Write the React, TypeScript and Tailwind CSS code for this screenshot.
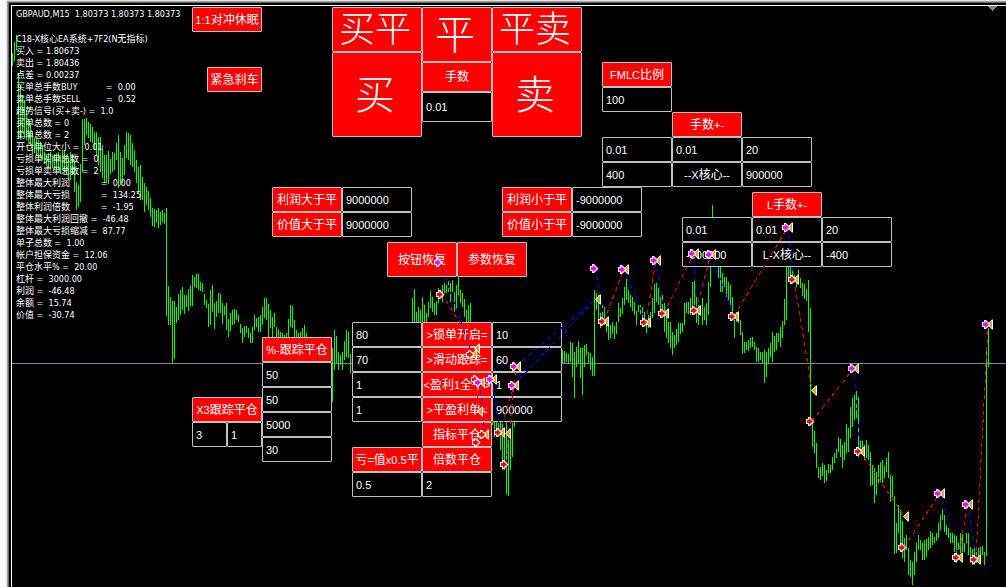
import React from 'react';
import { clsx } from 'clsx';

type Range = [number, number];

interface CandleRun {
  start: number;
  bars: Range[];
}

interface Trade {
  from: Range;
  to: Range;
  side: 'buy' | 'sell';
}

interface Marker {
  x: number;
  y: number;
  entry?: 'buy' | 'sell';
  exit?: boolean;
}

// canvas area starts right after the window frame
const ORIGIN_X = 12;
const ORIGIN_Y = 6;
const BAR_STEP = 2;
const PRICE_Y = 363;

const CANDLES: CandleRun[] = [
  {
    start: 12,
    bars: [
      [53, 66], [42, 61], [35, 50], [73, 139], [85, 140], [95, 132], [100, 138], [110, 140], [120, 142], [125, 145],
      [133, 154], [138, 153], [138, 156], [140, 158], [142, 158], [145, 160], [152, 164], [155, 166], [153, 168], [152, 168],
      [155, 168], [155, 170], [153, 169], [152, 170], [155, 174], [150, 170], [150, 172], [155, 175], [158, 180], [152, 180],
      [154, 175], [160, 192], [182, 210], [185, 207], [164, 202],
      [119, 172], [119, 145], [118, 135], [122, 138], [124, 142], [127, 143], [132, 150], [132, 155], [137, 165], [137, 172],
      [145, 178], [155, 183], [155, 183], [151, 184], [159, 174], [152, 172], [153, 170], [143, 160], [135, 188], [152, 185],
      [158, 183], [145, 175], [132, 158], [133, 160], [135, 165], [143, 167], [150, 172], [160, 183], [167, 193], [165, 200],
      [177, 200], [183, 212], [187, 205], [191, 210], [198, 217], [208, 226], [209, 227], [210, 223], [208, 228], [212, 225],
      [210, 222], [213, 224], [208, 316],
      [286, 325], [297, 325], [301, 363], [301, 359], [307, 323], [294, 320], [290, 315], [287, 310], [295, 314], [295, 307],
      [289, 311], [285, 306], [275, 306], [277, 287], [274, 288], [274, 290], [282, 291], [283, 292], [294, 305], [300, 308],
      [304, 327], [290, 325], [285, 312], [303, 329], [301, 317], [293, 313], [294, 313], [303, 324], [306, 315], [303, 330],
      [319, 337], [313, 331], [310, 325], [309, 324], [310, 320], [315, 322], [324, 333], [328, 343], [326, 337], [326, 333],
      [328, 338], [333, 343], [327, 343], [315, 330], [318, 327], [317, 332], [315, 332], [307, 325], [298, 318], [298, 320],
      [304, 337], [310, 328], [317, 337], [313, 327], [327, 337], [329, 340], [332, 340], [333, 343], [335, 340], [333, 337],
      [319, 338], [305, 327], [306, 328], [320, 337], [330, 338], [333, 338], [332, 338], [328, 338], [325, 338], [333, 338],
    ],
  },
  {
    start: 332,
    bars: [[348, 402], [330, 370], [336, 363], [352, 370], [355, 365], [352, 370], [341, 360], [330, 357], [332, 358], [354, 373]],
  },
  {
    start: 412,
    bars: [
      [298, 322], [289, 322], [312, 322], [307, 322], [310, 322], [297, 322], [305, 322], [313, 322], [302, 317], [291, 308],
      [297, 312], [303, 315], [301, 315], [288, 303], [290, 297], [285, 302], [283, 293], [285, 293], [281, 292], [283, 302],
      [280, 292], [292, 312], [285, 310], [277, 295], [290, 303], [293, 307], [299, 317], [310, 322], [305, 322], [303, 322],
    ],
  },
  {
    start: 492,
    bars: [
      [422, 425], [422, 437], [422, 430], [422, 436], [422, 450], [422, 470], [437, 470], [422, 494], [437, 496], [430, 470],
      [423, 457], [421, 427],
    ],
  },
  {
    start: 562,
    bars: [
      [350, 363], [351, 363], [353, 362], [354, 363], [342, 362], [343, 377], [352, 398], [347, 367], [341, 363], [348, 378],
      [348, 395], [345, 367], [344, 355], [352, 363], [353, 370], [357, 376], [290, 376], [293, 310], [295, 322], [313, 328],
      [305, 323], [307, 325], [318, 332], [323, 340], [325, 338], [322, 334], [326, 339], [322, 334], [303, 322], [308, 317],
      [298, 314], [287, 305], [279, 300], [290, 303], [295, 307], [297, 311], [302, 315], [311, 325], [305, 312], [305, 314],
      [307, 318], [312, 325], [318, 333], [315, 328], [312, 323], [298, 318], [284, 313], [283, 302], [288, 305], [297, 315],
      [295, 317], [303, 332], [315, 338], [322, 343], [322, 348], [332, 355], [335, 348], [329, 345], [323, 342], [323, 334],
      [323, 332], [303, 325], [302, 313], [302, 314], [298, 315], [282, 308], [279, 305], [297, 323], [305, 325], [305, 315],
      [298, 325], [307, 320], [303, 325], [282, 315], [262, 287], [205, 265], [260, 266], [260, 266], [260, 278], [260, 292],
      [273, 292], [277, 287], [277, 297], [282, 300], [285, 305], [297, 320], [320, 338], [312, 322], [316, 323], [320, 335],
      [332, 354], [342, 353], [342, 350], [340, 351], [338, 348], [337, 347], [342, 350], [347, 362], [348, 362], [352, 360],
      [352, 363], [350, 383], [352, 377], [348, 363], [343, 357], [332, 362], [336, 352], [333, 350], [333, 342], [327, 347],
      [321, 338], [299, 325], [262, 320], [262, 278], [262, 277], [262, 276], [275, 283], [278, 287], [270, 277], [278, 288],
      [283, 296], [284, 299], [289, 301], [280, 332], [308, 420], [420, 447], [431, 453], [443, 468], [467, 478], [467, 480],
      [463, 476], [465, 483], [470, 481], [464, 473], [465, 473], [457, 470], [453, 463], [449, 458], [437, 452], [439, 457],
      [445, 468], [442, 460], [424, 453], [428, 452], [407, 438], [398, 427], [395, 420], [391, 418], [397, 457], [441, 450],
      [441, 453], [445, 460], [440, 458], [445, 460], [452, 486], [465, 485], [468, 503], [472, 495], [465, 483], [462, 482],
      [460, 483], [466, 478], [458, 472], [452, 478], [475, 502], [476, 497], [496, 554], [523, 553], [505, 533], [510, 550],
      [521, 558], [538, 562], [535, 550], [548, 575], [560, 577], [562, 585], [552, 575], [543, 562], [535, 550], [540, 550],
      [543, 560], [540, 560], [539, 557], [537, 550], [531, 548], [533, 545], [537, 543], [533, 541], [523, 538], [515, 530],
      [509, 520], [515, 532], [525, 535], [528, 538], [533, 543], [533, 543], [535, 552], [536, 563], [543, 550], [533, 553],
      [534, 552], [543, 552], [533, 543], [533, 555], [547, 563], [549, 565], [548, 565], [552, 563], [548, 558], [547, 563],
      [546, 555], [552, 565], [351, 556], [328, 367],
    ],
  },
];

const TRADES: Trade[] = [
  { from: [440, 262], to: [472, 354], side: 'buy' },
  { from: [442, 294], to: [476, 349], side: 'sell' },
  { from: [476, 379], to: [478, 411], side: 'sell' },
  { from: [480, 382], to: [484, 434], side: 'buy' },
  { from: [478, 442], to: [492, 379], side: 'sell' },
  { from: [492, 379], to: [500, 432], side: 'buy' },
  { from: [500, 432], to: [514, 385], side: 'sell' },
  { from: [506, 464], to: [516, 366], side: 'sell' },
  { from: [516, 366], to: [596, 299], side: 'buy' },
  { from: [514, 385], to: [596, 299], side: 'buy' },
  { from: [596, 268], to: [604, 321], side: 'buy' },
  { from: [604, 321], to: [624, 269], side: 'sell' },
  { from: [624, 269], to: [646, 322], side: 'buy' },
  { from: [646, 322], to: [656, 260], side: 'sell' },
  { from: [656, 260], to: [664, 313], side: 'buy' },
  { from: [664, 313], to: [694, 253], side: 'sell' },
  { from: [694, 253], to: [696, 310], side: 'buy' },
  { from: [696, 310], to: [711, 254], side: 'sell' },
  { from: [711, 254], to: [734, 316], side: 'buy' },
  { from: [734, 316], to: [788, 227], side: 'sell' },
  { from: [788, 227], to: [794, 279], side: 'buy' },
  { from: [794, 279], to: [812, 390], side: 'sell' },
  { from: [812, 421], to: [854, 368], side: 'sell' },
  { from: [854, 368], to: [860, 451], side: 'buy' },
  { from: [860, 451], to: [904, 516], side: 'sell' },
  { from: [904, 547], to: [940, 493], side: 'sell' },
  { from: [940, 493], to: [958, 557], side: 'buy' },
  { from: [958, 557], to: [968, 504], side: 'sell' },
  { from: [968, 504], to: [976, 559], side: 'buy' },
  { from: [976, 559], to: [988, 324], side: 'sell' },
];

const MARKERS: Marker[] = [
  { x: 440, y: 262, entry: 'buy' },
  { x: 442, y: 294, entry: 'sell' },
  { x: 475, y: 348, exit: true },
  { x: 472, y: 354, entry: 'sell', exit: true },
  { x: 477, y: 379, entry: 'sell' },
  { x: 480, y: 382, entry: 'buy', exit: true },
  { x: 492, y: 379, entry: 'buy', exit: true },
  { x: 516, y: 366, entry: 'buy', exit: true },
  { x: 514, y: 385, entry: 'buy', exit: true },
  { x: 478, y: 411, exit: true },
  { x: 484, y: 434, entry: 'sell', exit: true },
  { x: 478, y: 442, entry: 'sell' },
  { x: 500, y: 432, entry: 'sell', exit: true },
  { x: 506, y: 433, exit: true },
  { x: 506, y: 464, entry: 'sell' },
  { x: 596, y: 268, entry: 'buy' },
  { x: 596, y: 299, exit: true },
  { x: 604, y: 321, entry: 'sell', exit: true },
  { x: 624, y: 269, entry: 'buy', exit: true },
  { x: 646, y: 322, entry: 'sell', exit: true },
  { x: 656, y: 260, entry: 'buy', exit: true },
  { x: 664, y: 313, entry: 'sell', exit: true },
  { x: 694, y: 253, entry: 'buy', exit: true },
  { x: 696, y: 310, entry: 'sell', exit: true },
  { x: 711, y: 254, entry: 'buy', exit: true },
  { x: 734, y: 316, entry: 'sell', exit: true },
  { x: 788, y: 227, entry: 'buy', exit: true },
  { x: 794, y: 279, entry: 'sell', exit: true },
  { x: 812, y: 390, exit: true },
  { x: 812, y: 421, entry: 'sell' },
  { x: 854, y: 368, entry: 'buy', exit: true },
  { x: 860, y: 451, entry: 'sell', exit: true },
  { x: 904, y: 516, exit: true },
  { x: 904, y: 547, entry: 'sell' },
  { x: 940, y: 493, entry: 'buy', exit: true },
  { x: 958, y: 557, entry: 'sell', exit: true },
  { x: 968, y: 504, entry: 'buy', exit: true },
  { x: 976, y: 559, entry: 'sell', exit: true },
  { x: 988, y: 324, entry: 'buy', exit: true },
];

const COMMENT_LINES = [
  'C18-X核心EA系统+7F2(N无指标)',
  '买入 = 1.80673',
  '卖出 = 1.80436',
  '点差 = 0.00237',
  '买单总手数BUY           =  0.00',
  '卖单总手数SELL          =  0.52',
  '趋势信号(买+卖-) =  1.0',
  '买单总数 = 0',
  '卖单总数 = 2',
  '开仓单位大小 =  0.01',
  '亏损单买单总数 =  0',
  '亏损单卖单总数 =  2',
  '整体最大利润            =  0.00',
  '整体最大亏损            =  134.25',
  '整体利润倍数            =  -1.95',
  '整体最大利润回撤 =  -46.48',
  '整体最大亏损缩减 =  87.77',
  '单子总数 =  1.00',
  '帐户担保资金 =  12.06',
  '平仓水平% =  20.00',
  '杠杆 =  3000.00',
  '利润 =  -46.48',
  '余额 =  15.74',
  '价值 =  -30.74',
];

const COLORS = { buy: '#ff00ff', sell: '#ff0000' };

// Han characters are set one size larger than latin on the captions
const Caption: React.FC<{ text: string }> = ({ text }) => (
  <span>
    {text.split(/([\u4e00-\u9fff]+)/).map((part, i) => (
      i % 2 ? <span key={i} className="text-xs leading-none">{part}</span> : part
    ))}
  </span>
);

const PanelButton: React.FC<{ text: string; className?: string; dark?: boolean }> = ({ text, className, dark }) => (
  <button
    type="button"
    className={clsx(
      'flex items-center justify-center overflow-hidden whitespace-nowrap rounded-[1px] border border-[#c0c0c0] text-[11px] leading-none text-white',
      dark ? 'bg-black' : 'bg-[#ff0000]',
      className ?? 'h-[25px]'
    )}
  >
    <Caption text={text} />
  </button>
);

const BigButton: React.FC<{ text: string; className: string }> = ({ text, className }) => (
  <button
    type="button"
    className={clsx('flex items-center justify-center whitespace-nowrap rounded-[1px] border border-[#c0c0c0] bg-[#ff0000] pr-1 font-light leading-none text-white', className)}
  >
    {text}
  </button>
);

const PanelInput: React.FC<{ value: string; label: string; className?: string }> = ({ value, label, className }) => (
  <input
    type="text"
    defaultValue={value}
    aria-label={label}
    className={clsx('w-full min-w-0 rounded-[1px] border border-[#c0c0c0] bg-black px-[3px] text-[11px] text-white outline-none', className ?? 'h-[25px]')}
  />
);

const CandleLayer: React.FC = () => (
  <svg className="absolute inset-0 h-full w-full" aria-hidden="true">
    <g transform={`translate(${-ORIGIN_X} ${-ORIGIN_Y})`} shapeRendering="crispEdges">
      <rect x={ORIGIN_X} y={PRICE_Y} width="100%" height="1" fill="#778899" />
      {CANDLES.map(run => run.bars.map(([top, bottom], i) => (
        <rect key={run.start + i * BAR_STEP} x={run.start + i * BAR_STEP} y={top} width="1" height={bottom - top} fill="#00ff00" />
      )))}
      <rect x="988" y={PRICE_Y} width="3" height="1" fill="#00ff00" />
      <path d="M988 6h9v1h-1v1h-1v1h-1v1h-1v1h-1v-1h-1v-1h-1v-1h-1v-1h-1z" fill="#778899" />
    </g>
  </svg>
);

const TradeLayer: React.FC = () => (
  <svg className="pointer-events-none absolute inset-0 h-full w-full" aria-hidden="true">
    <g transform={`translate(${-ORIGIN_X} ${-ORIGIN_Y})`}>
      {TRADES.map((t, i) => (
        <line
          key={i}
          x1={t.from[0]}
          y1={t.from[1]}
          x2={t.to[0]}
          y2={t.to[1]}
          stroke={t.side === 'buy' ? '#0000ff' : '#ff0000'}
          strokeDasharray="4 4"
          shapeRendering="crispEdges"
        />
      ))}
      {MARKERS.map((m, i) => (
        <g key={i} transform={`translate(${m.x} ${m.y})`}>
          {m.exit && (
            <>
              <path d="M5 -4.5V5.5H4L-1 0.5L4 -4.5Z" fill="#ffffff" />
              <path d="M4 -3.5V4.5L0 0.5Z" fill="#daa520" />
            </>
          )}
          {m.entry && (
            <>
              <path d="M-6 -2H-4V-4H-2L2.5 0.5L-2 5H-4V3H-6Z" fill="#ffffff" />
              <path d="M-5 -1H-3V-3L1 0.5L-3 4V2H-5Z" fill={COLORS[m.entry]} />
            </>
          )}
        </g>
      ))}
    </g>
  </svg>
);

export default function App() {
  return (
    <div className="flex min-h-screen bg-[#fafafa] pl-1.5 font-['Liberation_Sans','Noto_Sans_CJK_SC',sans-serif]">
      <div className="flex flex-1 border-l border-t border-[#e3e3e3]">
        <div className="flex flex-1 border-l border-t border-[#a0a0a0]">
          <div className="flex flex-1 border-l border-t border-[#696969] bg-black pl-0.5 pt-0.5">
            <main className="relative flex-1 overflow-hidden border-l border-t border-white bg-black text-white">
              <CandleLayer />

              <section className="relative whitespace-pre px-1 pt-0.5 font-['DejaVu_Sans_Condensed','Noto_Sans','Noto_Sans_CJK_SC',sans-serif] text-[9px] leading-3">
                <h1>GBPAUD,M15  1.80373 1.80373 1.80373</h1>
                <div className="mt-[13px]">
                  {COMMENT_LINES.map(line => (
                    <p key={line} className="h-3">{line}</p>
                  ))}
                </div>
              </section>

              {/* panels placed freely on the chart */}
              <div className="absolute left-[180px] top-px grid w-[70px]">
                <PanelButton text="1:1对冲休眠" />
              </div>
              <div className="absolute left-[195px] top-[61px] grid w-[55px]">
                <PanelButton text="紧急刹车" />
              </div>

              <div className="absolute left-[320px] top-px flex items-start">
                <div className="grid w-[90px]">
                  <BigButton text="买平" className="h-[45px] text-4xl" />
                  <BigButton text="买" className="h-[85px] text-[40px]" />
                </div>
                <div className="grid w-[70px]">
                  <BigButton text="平" className="h-[55px] text-[40px]" />
                  <PanelButton text="手数" className="h-[30px]" />
                  <PanelInput value="0.01" label="手数" className="h-[30px]" />
                </div>
                <div className="grid w-[90px]">
                  <BigButton text="平卖" className="h-[45px] text-4xl" />
                  <BigButton text="卖" className="h-[85px] text-[40px]" />
                </div>
              </div>

              <div className="absolute left-[590px] top-[56px] grid w-[70px]">
                <PanelButton text="FMLC比例" />
                <PanelInput value="100" label="FMLC比例" />
              </div>

              <div className="absolute left-[590px] top-[106px] grid w-[210px] grid-cols-3">
                <PanelButton text="手数+-" className="col-start-2 h-[25px]" />
                <PanelInput value="0.01" label="手数 1" className="col-start-1 h-[25px]" />
                <PanelInput value="0.01" label="手数+-" />
                <PanelInput value="20" label="手数 3" />
                <PanelInput value="400" label="X核心 下限" />
                <PanelButton text="--X核心--" dark />
                <PanelInput value="900000" label="X核心 上限" />
              </div>

              <div className="absolute left-[670px] top-[186px] grid w-[210px] grid-cols-3">
                <PanelButton text="L手数+-" className="col-start-2 h-[25px]" />
                <PanelInput value="0.01" label="L手数 1" className="col-start-1 h-[25px]" />
                <PanelInput value="0.01" label="L手数+-" />
                <PanelInput value="20" label="L手数 3" />
                <PanelInput value="-900000" label="L-X核心 下限" />
                <PanelButton text="L-X核心--" dark />
                <PanelInput value="-400" label="L-X核心 上限" />
              </div>

              <div className="absolute left-[260px] top-[181px] grid w-[140px] grid-cols-2">
                <PanelButton text="利润大于平" />
                <PanelInput value="9000000" label="利润大于平" />
                <PanelButton text="价值大于平" />
                <PanelInput value="9000000" label="价值大于平" />
              </div>

              <div className="absolute left-[490px] top-[181px] grid w-[140px] grid-cols-2">
                <PanelButton text="利润小于平" />
                <PanelInput value="-9000000" label="利润小于平" />
                <PanelButton text="价值小于平" />
                <PanelInput value="-9000000" label="价值小于平" />
              </div>

              <div className="absolute left-[375px] top-[236px] grid w-[140px] grid-cols-2">
                <PanelButton text="按钮恢复" className="h-[35px]" />
                <PanelButton text="参数恢复" className="h-[35px]" />
              </div>

              <div className="absolute left-[250px] top-[331px] grid w-[70px]">
                <PanelButton text="%-跟踪平仓" />
                <PanelInput value="50" label="跟踪平仓 1" />
                <PanelInput value="50" label="跟踪平仓 2" />
                <PanelInput value="5000" label="跟踪平仓 3" />
                <PanelInput value="30" label="跟踪平仓 4" />
              </div>

              <div className="absolute left-[180px] top-[391px] grid w-[70px] grid-cols-2">
                <PanelButton text="X3跟踪平仓" className="col-span-2 h-[25px]" />
                <PanelInput value="3" label="X3跟踪平仓 1" />
                <PanelInput value="1" label="X3跟踪平仓 2" />
              </div>

              <div className="absolute left-[340px] top-[316px] grid w-[210px] grid-cols-3">
                <PanelInput value="80" label="锁单开启 1" />
                <PanelButton text=">锁单开启=" />
                <PanelInput value="10" label="锁单开启 2" />
                <PanelInput value="70" label="滑动跟踪 1" />
                <PanelButton text=">滑动跟踪=" />
                <PanelInput value="60" label="滑动跟踪 2" />
                <PanelInput value="1" label="盈利全平 1" />
                <PanelButton text="<盈利1全平>" />
                <PanelInput value="1" label="盈利全平 2" />
                <PanelInput value="1" label="平盈利单 1" />
                <PanelButton text=">平盈利单<" />
                <PanelInput value="900000" label="平盈利单 2" />
                <PanelButton text="指标平仓" className="col-start-2 h-[25px]" />
                <PanelButton text="亏=值x0.5平" className="col-start-1 h-[25px]" />
                <PanelButton text="倍数平仓" />
                <PanelInput value="0.5" label="亏=值x0.5平" className="col-start-1 h-[25px]" />
                <PanelInput value="2" label="倍数平仓" />
              </div>

              <TradeLayer />
            </main>
          </div>
        </div>
      </div>
    </div>
  );
}
